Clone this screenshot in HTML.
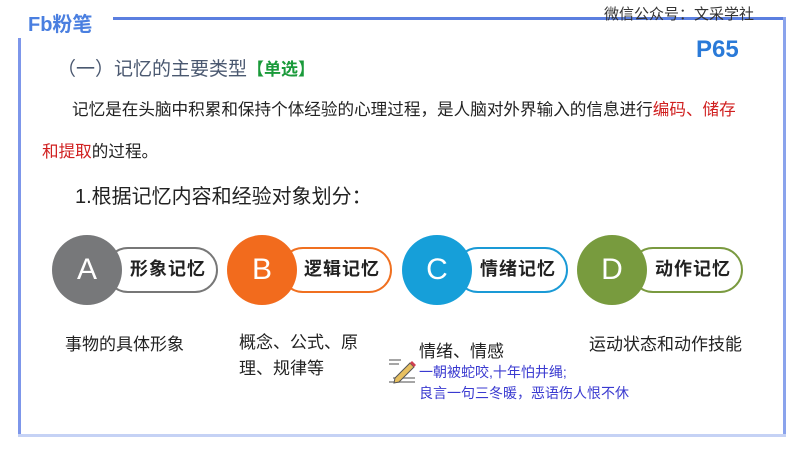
<!DOCTYPE html>
<html><head><meta charset="utf-8"><style>
body{margin:0;width:800px;height:450px;background:#fff;position:relative;overflow:hidden;font-family:"Liberation Sans","Noto Sans CJK SC",sans-serif;color:#222}
.a{position:absolute;white-space:nowrap}
.circ{position:absolute;width:70px;height:70px;border-radius:50%;color:#fff;font-size:30px;text-align:center;line-height:70px}
.pill{position:absolute;height:46px;border:2.5px solid;border-radius:25px;background:#fff;box-sizing:border-box;font-weight:bold;font-size:18px;line-height:41px;text-align:right;padding-right:10px;letter-spacing:1px}
</style></head><body>
<div class="a" style="left:113px;top:17px;width:672px;height:3px;background:#5b7fe0"></div>
<div class="a" style="left:783px;top:17px;width:3px;height:420px;background:#8aa3ec"></div>
<div class="a" style="left:18px;top:38px;width:3px;height:398px;background:#7d96ea"></div>
<div class="a" style="left:18px;top:434px;width:768px;height:3px;background:#c5d2f5"></div>
<div class="a" style="left:28px;top:8px;font-size:20px;font-weight:bold;color:#4a7fe0">Fb粉笔</div>
<div class="a" style="left:604px;top:3px;font-size:15px;color:#333">微信公众号：文采学社</div>
<div class="a" style="left:696px;top:36px;font-size:24px;font-weight:bold;color:#2a7ad8">P65</div>
<div class="a" style="left:57px;top:54px;font-size:19px;color:#4a5870">（一）记忆的主要类型<span style="color:#1a9a3a;font-weight:bold;font-size:17px">【单选】</span></div>
<div class="a" style="left:72px;top:96px;font-size:16.6px">记忆是在头脑中积累和保持个体经验的心理过程，是人脑对外界输入的信息进行<span style="color:#d02020">编码、储存</span></div>
<div class="a" style="left:42px;top:138px;font-size:16.6px"><span style="color:#d02020">和提取</span>的过程。</div>
<div class="a" style="left:75px;top:180px;font-size:20px">1.根据记忆内容和经验对象划分：</div>

<div class="pill" style="left:105px;top:247px;width:113px;border-color:#777">形象记忆</div>
<div class="circ" style="left:52px;top:235px;background:#77787a">A</div>
<div class="pill" style="left:280px;top:247px;width:112px;border-color:#f07020">逻辑记忆</div>
<div class="circ" style="left:227px;top:235px;background:#f26b1d">B</div>
<div class="pill" style="left:455px;top:247px;width:113px;border-color:#1a9ad6">情绪记忆</div>
<div class="circ" style="left:402px;top:235px;background:#169fd9">C</div>
<div class="pill" style="left:630px;top:247px;width:113px;border-color:#7a9a40">动作记忆</div>
<div class="circ" style="left:577px;top:235px;background:#789b3e">D</div>

<div class="a" style="left:65px;top:330px;font-size:17px">事物的具体形象</div>
<div class="a" style="left:239px;top:330px;font-size:17px;line-height:26px">概念、公式、原<br>理、规律等</div>
<div class="a" style="left:419px;top:337px;font-size:17px">情绪、情感</div>
<div class="a" style="left:589px;top:330px;font-size:17px">运动状态和动作技能</div>
<div class="a" style="left:419px;top:362px;font-size:14px;color:#3a3ad0;line-height:21px">一朝被蛇咬,十年怕井绳;<br>良言一句三冬暖，恶语伤人恨不休</div>
<svg class="a" style="left:387px;top:356px" width="30" height="30" viewBox="0 0 30 30"><g stroke="#888" stroke-width="1.5"><line x1="2" y1="4" x2="14" y2="4"/><line x1="2" y1="8" x2="12" y2="8"/><line x1="2" y1="26" x2="28" y2="26"/><line x1="6" y1="22" x2="28" y2="22"/></g><path d="M8 22 L23 7 L27 11 L12 26 L7 27Z" fill="#e8c060" stroke="#555"/><path d="M23 7 L25 5 L29 9 L27 11Z" fill="#d04050"/></svg>
</body></html>
